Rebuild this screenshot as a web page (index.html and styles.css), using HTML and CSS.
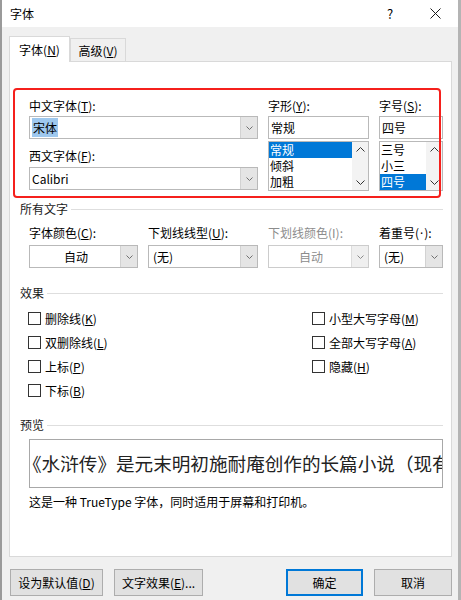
FILE: index.html
```html
<!DOCTYPE html>
<html lang="zh-CN">
<head>
  <meta charset="UTF-8" />
  <title>字体</title>
  <link rel="stylesheet" href="styles.css">
</head>
<body>
  <div class="window">
    <div class="titlebar">
      <span class="title">字体</span>
      <span class="help">?</span>
      <span class="close">
        <svg width="11" height="11" viewBox="0 0 11 11"><path d="M0.5 0.5L10.5 10.5M10.5 0.5L0.5 10.5" stroke="#1a1a1a" stroke-width="1" fill="none"/></svg>
      </span>
    </div>

    <div class="content">
      <div class="tabs">
        <div class="tab active">字体(<u>N</u>)</div>
        <div class="tab">高级(<u>V</u>)</div>
      </div>

      <div class="panel">
        <!-- red annotation box drawn over the dialog -->
        <div class="mark"></div>

        <div class="font-row">
          <div class="col">
            <label class="lbl">中文字体(<u>T</u>):</label>
            <div class="combo"><span class="val"><span class="sel">宋体</span></span><span class="drop"><svg width="7" height="4" viewBox="0 0 7 4"><path d="M0.5 0.5L3.5 3.5L6.5 0.5" stroke="#707070" fill="none"/></svg></span></div>
            <label class="lbl second">西文字体(<u>F</u>):</label>
            <div class="combo"><span class="val">Calibri</span><span class="drop"><svg width="7" height="4" viewBox="0 0 7 4"><path d="M0.5 0.5L3.5 3.5L6.5 0.5" stroke="#707070" fill="none"/></svg></span></div>
          </div>

          <div class="col">
            <label class="lbl">字形(<u>Y</u>):</label>
            <div class="field">常规</div>
            <div class="list">
              <div class="items">
                <div class="item on">常规</div>
                <div class="item">倾斜</div>
                <div class="item">加粗</div>
              </div>
              <div class="scroll">
                <svg width="9" height="5" viewBox="0 0 9 5"><path d="M0.5 4.5L4.5 0.5L8.5 4.5" stroke="#333" fill="none"/></svg>
                <svg width="9" height="5" viewBox="0 0 9 5"><path d="M0.5 0.5L4.5 4.5L8.5 0.5" stroke="#333" fill="none"/></svg>
              </div>
            </div>
          </div>

          <div class="col">
            <label class="lbl">字号(<u>S</u>):</label>
            <div class="field">四号</div>
            <div class="list">
              <div class="items">
                <div class="item">三号</div>
                <div class="item">小三</div>
                <div class="item on">四号</div>
              </div>
              <div class="scroll">
                <svg width="9" height="5" viewBox="0 0 9 5"><path d="M0.5 4.5L4.5 0.5L8.5 4.5" stroke="#333" fill="none"/></svg>
                <svg width="9" height="5" viewBox="0 0 9 5"><path d="M0.5 0.5L4.5 4.5L8.5 0.5" stroke="#333" fill="none"/></svg>
              </div>
            </div>
          </div>
        </div>

        <div class="group-head first">所有文字</div>
        <div class="text-row">
          <div class="col">
            <label class="lbl">字体颜色(<u>C</u>):</label>
            <div class="combo"><span class="val center">自动</span><span class="drop"><svg width="7" height="4" viewBox="0 0 7 4"><path d="M0.5 0.5L3.5 3.5L6.5 0.5" stroke="#707070" fill="none"/></svg></span></div>
          </div>
          <div class="col">
            <label class="lbl">下划线线型(<u>U</u>):</label>
            <div class="combo"><span class="val pad">(无)</span><span class="drop"><svg width="7" height="4" viewBox="0 0 7 4"><path d="M0.5 0.5L3.5 3.5L6.5 0.5" stroke="#707070" fill="none"/></svg></span></div>
          </div>
          <div class="col disabled">
            <label class="lbl">下划线颜色(I):</label>
            <div class="combo"><span class="val center">自动</span><span class="drop"><svg width="7" height="4" viewBox="0 0 7 4"><path d="M0.5 0.5L3.5 3.5L6.5 0.5" stroke="#8a8a8a" fill="none"/></svg></span></div>
          </div>
          <div class="col">
            <label class="lbl">着重号(<span class="dot">·</span>):</label>
            <div class="combo"><span class="val pad">(无)</span><span class="drop"><svg width="7" height="4" viewBox="0 0 7 4"><path d="M0.5 0.5L3.5 3.5L6.5 0.5" stroke="#707070" fill="none"/></svg></span></div>
          </div>
        </div>

        <div class="group-head effects">效果</div>
        <div class="checks">
          <div class="check-col left">
            <div class="check"><span class="box"></span>删除线(<u>K</u>)</div>
            <div class="check"><span class="box"></span>双删除线(<u>L</u>)</div>
            <div class="check"><span class="box"></span>上标(<u>P</u>)</div>
            <div class="check"><span class="box"></span>下标(<u>B</u>)</div>
          </div>
          <div class="check-col">
            <div class="check"><span class="box"></span>小型大写字母(<u>M</u>)</div>
            <div class="check"><span class="box"></span>全部大写字母(<u>A</u>)</div>
            <div class="check"><span class="box"></span>隐藏(<u>H</u>)</div>
          </div>
        </div>

        <div class="group-head preview-head">预览</div>
        <div class="preview-wrap">
          <div class="preview"><span>《水浒传》是元末明初施耐庵创作的长篇小说（现有</span></div>
          <div class="note">这是一种 TrueType 字体，同时适用于屏幕和打印机。</div>
        </div>
      </div>

      <div class="footer">
        <button class="btn wide">设为默认值(<u>D</u>)</button>
        <button class="btn effect">文字效果(<u>E</u>)...</button>
        <span class="spacer"></span>
        <button class="btn ok">确定</button>
        <button class="btn cancel">取消</button>
      </div>
    </div>
  </div>
</body>
</html>
```

FILE: styles.css
```css
body {
  margin: 0;
  font-family: "Noto Sans CJK SC", "Noto Sans", sans-serif;
  font-size: 12px;
  color: #000;
}

u {
  text-decoration: underline;
  text-underline-offset: 1px;
}

.window {
  width: 461px;
  height: 600px;
  box-sizing: border-box;
  border-left: 2px solid #9a9a9a;
  border-right: 3px solid #b4b4b4;
  background-color: #f0f0f0;
  overflow: hidden;
}

.titlebar {
  height: 27px;
  background-color: #fff;
  display: flex;
  align-items: center;
  padding: 0 17px 0 8px;
}

.title {
  flex: 1;
}

.help {
  width: 12px;
  text-align: center;
  font-size: 13px;
  margin-right: 34px;
}

.close {
  display: flex;
}

.content {
  padding: 9px 6px 0 7px;
}

.tabs {
  display: flex;
  align-items: flex-end;
  height: 25px;
}

.tab {
  box-sizing: border-box;
  height: 23px;
  padding-top: 4px;
  line-height: 16px;
  width: 56px;
  text-align: center;
  border: 1px solid #d9d9d9;
  border-bottom: none;
  background-color: #f0f0f0;
}

.tab.active {
  position: relative;
  z-index: 1;
  width: 61px;
  height: 26px;
  padding-top: 5px;
  margin-bottom: -1px;
  background-color: #fff;
}

.panel {
  position: relative;
  box-sizing: border-box;
  height: 496px;
  background-color: #fff;
  border: 1px solid #d9d9d9;
  padding: 36px 8px 0 10px;
}

.mark {
  position: absolute;
  left: 3px;
  top: 26px;
  width: 428px;
  height: 110px;
  box-sizing: border-box;
  border: 2px solid #f5201c;
  border-radius: 4px;
  pointer-events: none;
  z-index: 2;
}

.lbl {
  display: block;
  line-height: 16px;
  height: 16px;
  margin-bottom: 2px;
  white-space: nowrap;
}

.dot {
  font-family: "Noto Sans", sans-serif;
  padding: 0 1px;
}

.font-row {
  display: grid;
  grid-template-columns: 229px 101px 64px;
  column-gap: 10px;
  padding-left: 9px;
}

.font-row .lbl.second {
  margin-top: 9px;
  margin-bottom: 3px;
}

.combo {
  box-sizing: border-box;
  height: 23px;
  display: flex;
  border: 1px solid #b9b9b9;
  background-color: #fff;
}

.combo .val {
  flex: 1;
  line-height: 21px;
  padding-left: 2px;
  white-space: nowrap;
}

.combo .val.center {
  text-align: center;
}

.combo .val.pad {
  padding-left: 4px;
}

.sel {
  background-color: #9ec8ee;
  padding: 1px 1px;
}

.drop {
  width: 16px;
  background-color: #e5e5e5;
  border-left: 1px solid #d2d2d2;
  display: flex;
  align-items: center;
  justify-content: center;
}

.field {
  box-sizing: border-box;
  height: 23px;
  border: 1px solid #b9b9b9;
  line-height: 21px;
  padding-left: 2px;
}

.list {
  box-sizing: border-box;
  height: 50px;
  margin-top: 2px;
  border: 1px solid #b9b9b9;
  display: flex;
}

.items {
  flex: 1;
}

.item {
  height: 16px;
  line-height: 16px;
  padding-left: 1px;
}

.item.on {
  background-color: #0078d7;
  color: #fff;
}

.scroll {
  width: 16px;
  background-color: #f3f3f3;
  display: flex;
  flex-direction: column;
  align-items: center;
  justify-content: space-between;
  padding: 5px 0;
  box-sizing: border-box;
}

.group-head {
  display: flex;
  align-items: center;
  gap: 3px;
  line-height: 16px;
  height: 16px;
  color: #1a1a1a;
}

.group-head::after {
  content: "";
  flex: 1;
  height: 1px;
  background-color: #dedede;
}

.group-head.first {
  margin-top: 10px;
}

.text-row {
  display: grid;
  grid-template-columns: 109px 110px 101px 64px;
  column-gap: 10px;
  padding-left: 9px;
  margin-top: 8px;
}

.text-row .lbl {
  margin-bottom: 4px;
}

.disabled .lbl,
.disabled .val {
  color: #8c8c8c;
}

.disabled .combo {
  border-color: #cccccc;
}

.disabled .drop {
  background-color: #efefef;
  border-left-color: #dcdcdc;
}

.group-head.effects {
  margin-top: 17px;
}

.checks {
  display: flex;
  margin-top: 5px;
  padding-left: 8px;
}

.check-col.left {
  flex: none;
  width: 284px;
}

.check {
  display: flex;
  align-items: center;
  height: 24px;
  white-space: nowrap;
}

.box {
  box-sizing: border-box;
  width: 13px;
  height: 13px;
  border: 1px solid #333;
  background-color: #fff;
  margin-right: 4px;
}

.group-head.preview-head {
  margin-top: 15px;
}

.preview-wrap {
  padding-left: 9px;
}

.preview {
  box-sizing: border-box;
  height: 49px;
  margin-top: 6px;
  border: 1px solid #a8a8a8;
  overflow: hidden;
  white-space: nowrap;
  font-size: 18.6px;
  line-height: 45px;
  color: #222;
}

.preview span {
  margin-left: -7px;
}

.note {
  margin-top: 6px;
  line-height: 16px;
}

.footer {
  display: flex;
  margin-top: 12px;
  padding-left: 1px;
}

.btn {
  box-sizing: border-box;
  height: 27px;
  font-family: "Noto Sans CJK SC", "Noto Sans", sans-serif;
  font-size: 12px;
  color: #000;
  background-color: #e1e1e1;
  border: 1px solid #adadad;
  padding: 0;
  text-align: center;
}

.btn.wide {
  width: 93px;
}

.btn.effect {
  width: 89px;
  margin-left: 11px;
}

.spacer {
  flex: 1;
}

.btn.ok {
  width: 77px;
  border-color: #0078d7;
  box-shadow: inset 0 0 0 1px #0078d7;
}

.btn.cancel {
  width: 78px;
  margin-left: 11px;
}
```
